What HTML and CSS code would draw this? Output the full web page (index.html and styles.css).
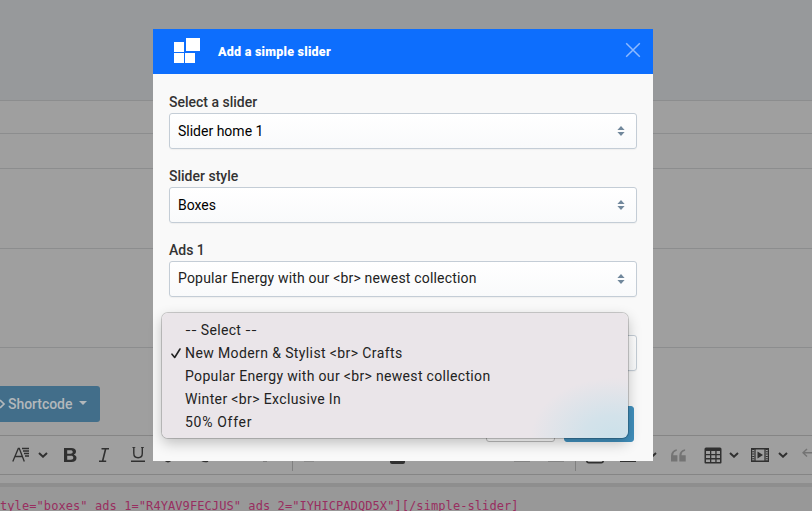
FILE: index.html
```html
<!DOCTYPE html>
<html lang="en">
<head>
<meta charset="utf-8">
<title>Add a simple slider</title>
<link rel="stylesheet" href="styles.css">
</head>
<body>
<main class="page">
  <div class="band"></div>
  <div class="row row-title"></div>
  <div class="row row-link"></div>
  <div class="row row-desc"></div>
  <div class="row row-meta"></div>
  <div class="actions"><div class="shortcode"><svg width="7" height="12" viewBox="0 0 7 12"><path d="M0 2l4 4-4 4" fill="none" stroke="currentColor" stroke-width="1.7"/></svg><span>Shortcode</span><i class="caret"></i></div></div>
  <div class="toolbar">
    <svg width="18" height="16" viewBox="0 0 18 16"><path d="M.8 14.5L6.3 1.5h1l5 13M2.8 9.5h7.8M10 1.5h7M11 4h6M12 6.5h5M13 9h4" fill="none" stroke="currentColor" stroke-width="1.3"/></svg>
    <svg width="10" height="6" viewBox="0 0 10 6"><path d="M1 1l4 3.7L9 1" fill="none" stroke="currentColor" stroke-width="2"/></svg>
    <svg class="bold" width="13" height="14" viewBox="0 0 13 14"><path fill-rule="evenodd" d="M0 0h7.2c3.2 0 4.8 1.3 4.8 3.6 0 1.5-.8 2.6-2.2 3.1 1.8.4 2.7 1.6 2.7 3.3 0 2.6-1.9 4-5 4H0zm3.2 2.3v3.4h3.2c1.6 0 2.3-.5 2.3-1.7S8 2.3 6.4 2.3zm0 5.5v3.9h3.7c1.6 0 2.4-.7 2.4-1.9 0-1.4-.9-2-2.5-2z" fill="currentColor"/></svg>
    <svg width="12" height="14" viewBox="0 0 12 14"><path d="M3.5.8H11M1 13.2h7.2M7.6 1L4.6 13" fill="none" stroke="currentColor" stroke-width="1.6"/></svg>
    <svg width="14" height="16" viewBox="0 0 14 16"><path d="M2.8 0v6.2c0 3.2 1.3 4.5 4.3 4.5s4.2-1.3 4.2-4.5V0M1.3 0h3M10 0h3M0 14.2h14" fill="none" stroke="currentColor" stroke-width="1.4"/></svg>
    <svg width="12" height="16" viewBox="0 0 12 16"><path d="M1.5 12.5Q5 16.6 8.5 12.5" fill="none" stroke="currentColor" stroke-width="1.8"/></svg>
    <svg width="8" height="16" viewBox="0 0 8 16"><path d="M1 13.5q3 1.8 6 .5" fill="none" stroke="currentColor" stroke-width="1.5"/></svg>
    <svg class="faint" width="3" height="16" viewBox="0 0 3 16"><path d="M1.5 3v10.5" stroke="currentColor"/></svg>
    <svg class="faint" width="7" height="16" viewBox="0 0 7 16"><path d="M3 2v12M1 14.3h4" stroke="currentColor"/></svg>
    <i class="sep"></i>
    <svg class="faint" width="12" height="16" viewBox="0 0 12 16"><path d="M1 14h10" stroke="currentColor"/></svg>
    <svg width="16" height="18" viewBox="0 0 16 18"><rect y="3" width="15" height="15" rx="2" fill="currentColor"/></svg>
    <svg class="faint" width="16" height="16" viewBox="0 0 16 16"><path d="M0 14h16" stroke="currentColor" stroke-width="1.2"/></svg>
    <svg class="faint" width="16" height="16" viewBox="0 0 16 16"><path d="M0 14h16" stroke="currentColor" stroke-width="1.2"/></svg>
    <i class="sep"></i>
    <svg width="18" height="18" viewBox="0 0 18 18"><rect x=".8" y="2" width="16.4" height="14.7" rx="2" fill="none" stroke="currentColor" stroke-width="1.5"/></svg>
    <svg width="16" height="16" viewBox="0 0 16 16"><path d="M0 14.2h16" stroke="currentColor" stroke-width="1.6"/></svg>
    <svg width="10" height="6" viewBox="0 0 10 6"><path d="M1 1l4 3.7L9 1" fill="none" stroke="currentColor" stroke-width="2"/></svg>
    <svg class="faint" width="15" height="13" viewBox="0 0 15 13"><path d="M0 6.7Q.2 1.5 5.8.3v1.5C3.5 2.4 2.2 4 2.2 6.3h4.2v6.2H0zM8.3 6.7Q8.5 1.5 14.1.3v1.5c-2.3.6-3.6 2.2-3.6 4.5h4.2v6.2H8.3z" fill="currentColor"/></svg>
    <svg width="18" height="17" viewBox="0 0 18 17"><path fill-rule="evenodd" d="M2 .5h14q1.5 0 1.5 1.5v13.5q0 1-1 1H1.5q-1 0-1-1V2Q.5.5 2 .5zM2 4v3h4V4zm5.3 0v3h4V4zm5.3 0v3H16V4zM2 8.3v2.8h4V8.3zm5.3 0v2.8h4V8.3zm5.3 0v2.8H16V8.3zM2 12.4V15h4v-2.6zm5.3 0V15h4v-2.6zm5.3 0V15H16v-2.6z" fill="currentColor"/></svg>
    <svg width="10" height="6" viewBox="0 0 10 6"><path d="M1 1l4 3.7L9 1" fill="none" stroke="currentColor" stroke-width="2"/></svg>
    <svg width="18" height="14" viewBox="0 0 18 14"><path d="M0 .8h18M0 13.2h18" stroke="currentColor" stroke-width="1.5"/><path d="M.6 1v12M17.4 1v12M4 1v12M14 1v12" stroke="currentColor" stroke-width="1.2"/><path d="M2.2 1v12M15.8 1v12" stroke="currentColor" stroke-width="2" stroke-dasharray="1 1.3"/><path d="M6.5 3.5L12 7l-5.5 3.5z" fill="currentColor"/></svg>
    <svg width="10" height="6" viewBox="0 0 10 6"><path d="M1 1l4 3.7L9 1" fill="none" stroke="currentColor" stroke-width="2"/></svg>
    <svg class="faint undo" width="14" height="10" viewBox="0 0 14 10"><path d="M5 1L1 4.8l4 3.8M1 4.8h13" fill="none" stroke="currentColor" stroke-width="1.4"/></svg>
  </div>
  <div class="gap"></div>
  <pre class="code">tyle="boxes" ads_1="R4YAV9FECJUS" ads_2="IYHICPADQD5X"][/simple-slider]</pre>
</main>

<section class="modal">
  <header class="modal-head">
    <svg class="logo" width="27" height="26" viewBox="0 0 27 26"><path d="M0 4h10v10H0zM12 0h14v13H12zM0 15h10v10H0zM11 15h10v10H11z" fill="#fff"/></svg>
    <h4>Add a simple slider</h4>
    <svg class="close" width="16" height="16" viewBox="0 0 16 16"><path d="M1.2 1.2l13.6 13.6M14.8 1.2L1.2 14.8" stroke="#8ebaff" stroke-width="1.5"/></svg>
  </header>
  <div class="modal-body">
    <div class="field"><label>Select a slider</label><div class="select"><span>Slider home 1</span><svg width="8" height="10" viewBox="0 0 8 10"><path d="M4 0l3.6 4H.4zM.4 6h7.2L4 10z" fill="#71889c"/></svg></div></div>
    <div class="field"><label>Slider style</label><div class="select"><span>Boxes</span><svg width="8" height="10" viewBox="0 0 8 10"><path d="M4 0l3.6 4H.4zM.4 6h7.2L4 10z" fill="#71889c"/></svg></div></div>
    <div class="field"><label>Ads 1</label><div class="select"><span class="chosen">Popular Energy with our &lt;br&gt; newest collection</span><svg width="8" height="10" viewBox="0 0 8 10"><path d="M4 0l3.6 4H.4zM.4 6h7.2L4 10z" fill="#71889c"/></svg></div></div>
    <div class="field"><label></label><div class="select"></div></div>
    <footer class="buttons"><div class="btn"></div><div class="btn primary"></div></footer>
  </div>
  <ul class="menu">
    <li><span class="dashes">--</span> Select <span class="dashes">--</span></li>
    <li class="current"><svg class="check" width="10" height="11" viewBox="0 0 10 11"><path d="M1 6.2l2.7 3.3L9 1" fill="none" stroke="#222" stroke-width="1.6" stroke-linecap="round" stroke-linejoin="round"/></svg>New Modern &amp; Stylist &lt;br&gt; Crafts</li>
    <li>Popular Energy with our &lt;br&gt; newest collection</li>
    <li class="winter">Winter &lt;br&gt; Exclusive In</li>
    <li class="offer">50% Offer</li>
  </ul>
</section>
</body>
</html>
```
FILE: styles.css
```css
* { box-sizing: border-box; }
body { margin: 0; width: 812px; height: 511px; overflow: hidden; position: relative; font-family: Roboto, sans-serif; font-size: 14px; background: #9f9f9f; }
svg { display: block; flex: none; }
.page { height: 511px; overflow: hidden; display: flex; flex-direction: column; }
.band { height: 101px; background: #97999b; border-bottom: 1px solid #8c8d8e; flex: none; }
.row { border-bottom: 1px solid #8c8d8e; flex: none; }
.row-title { height: 33px; }
.row-link { height: 35px; }
.row-desc { height: 80px; }
.row-meta { height: 99px; }
.actions { height: 87px; padding-top: 38px; flex: none; }
.shortcode { width: 100px; height: 36px; background: #426e8a; border-radius: 0 3px 3px 0; color: #b3b8bb; display: flex; align-items: center; font-size: 14px; font-weight: 500; }
.shortcode span { margin-left: 1px; letter-spacing: -.05px; }
.caret { border: 4px solid transparent; border-top-color: #b3b8bb; border-bottom: 0; margin: -2px 0 0 7px; }
.toolbar { height: 40px; border-top: 1px solid #858585; border-bottom: 1px solid #858585; flex: none; display: grid; align-items: center; color: #303030; padding-left: 12px; grid-template-columns: 26px 25px 35px 33px 32px 38px 32px 29px 30px 11px 87px 124px 34px 27px 11px 34px 27px 24px 33px 25px 22px 27px 24px 14px; }
.bold { margin-left: 1px; }
.undo { margin-top: -4px; }
.faint { color: #747474; }
.sep { width: 1px; height: 32px; background: #808080; }
.gap { height: 12px; flex: none; border-bottom: 4px solid #8e8e8e; }
.code { flex: 1; margin: 0; padding-top: 10px; background: #989898; color: #982e60; font: 12px/18px "DejaVu Sans Mono", monospace; letter-spacing: 0.08px; }
.modal { position: absolute; left: 153px; top: 29px; width: 500px; height: 432px; background: #f9f9f9; }
.modal-head { height: 45px; background: #0d6efd; display: flex; align-items: center; padding: 0 12px 0 21px; }
.logo { margin-top: -1px; }
.modal-head h4 { margin: 0 auto 0 17px; color: #fff; font-size: 12.5px; font-weight: 900; letter-spacing: .24px; }
.close { margin-top: -4px; }
.modal-body { padding: 17px 16px 0; }
.field { margin-bottom: 16px; }
.field label { display: block; height: 22px; line-height: 22px; font-weight: 500; color: #333; }
.select { height: 36px; border: 1px solid #c4cdd6; border-radius: 3px; background: linear-gradient(#fff, #f9fafb); box-shadow: 0 1px 1px rgba(0,0,0,.04); display: flex; align-items: center; justify-content: space-between; padding: 0 11px 0 8px; color: #000; }
.chosen { color: #222; letter-spacing: .18px; margin-top: -2px; }
.buttons { display: flex; justify-content: flex-end; gap: 9px; margin-top: 35px; padding-right: 3px; }
.btn { width: 69px; height: 36px; border: 1px solid #bbb; border-radius: 3px; background: #fff; }
.btn.primary { width: 70px; background: #4190bd; border-color: #4190bd; }
.menu { position: absolute; left: 9px; top: 284px; width: 466px; height: 125px; margin: 0; padding: 6px 0 0 23px; list-style: none; border-radius: 6px; background: radial-gradient(ellipse 82px 58px at 451px 123px, #cce1ea 0%, #d3e2ea 35%, #eae5e9 100%); box-shadow: 0 0 0 1px rgba(0,0,0,.18), 0 5px 14px rgba(0,0,0,.24); color: #222; letter-spacing: .33px; }
.menu li { height: 23px; line-height: 23px; position: relative; white-space: nowrap; }
.menu .current { letter-spacing: .39px; }
.menu .winter { letter-spacing: .37px; }
.menu .offer { letter-spacing: .7px; }
.dashes { font-family: Inter, sans-serif; font-size: 13px; letter-spacing: 0; }
.check { position: absolute; left: -14px; top: 6px; }
```
